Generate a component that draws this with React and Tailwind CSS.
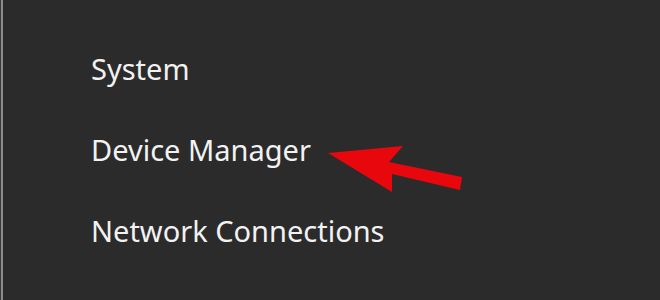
export default function App() {
  const items = ["System", "Device Manager", "Network Connections"];
  return (
    <div className="relative w-[660px] h-[300px] bg-[#2b2b2b] overflow-hidden flex">
      <div className="w-px h-full bg-[#3a3a3a]" />
      <div className="w-[2px] h-full bg-[#8c8c8c]" />
      <div className="flex flex-col pt-[28px] pl-[88px]">
        {items.map((t) => (
          <div
            key={t}
            className="text-[29px] leading-[81px] text-[#f2f2f2] whitespace-nowrap"
            style={{ fontFamily: '"Noto Sans", sans-serif' }}
          >
            {t}
          </div>
        ))}
      </div>
      <svg
        className="absolute left-0 top-0"
        width="660"
        height="300"
        viewBox="0 0 660 300"
      >
        <polygon
          points="328,153 403,146 389,162 462,177 460,190 392,174 392,192"
          fill="#e8070c"
        />
      </svg>
    </div>
  );
}
